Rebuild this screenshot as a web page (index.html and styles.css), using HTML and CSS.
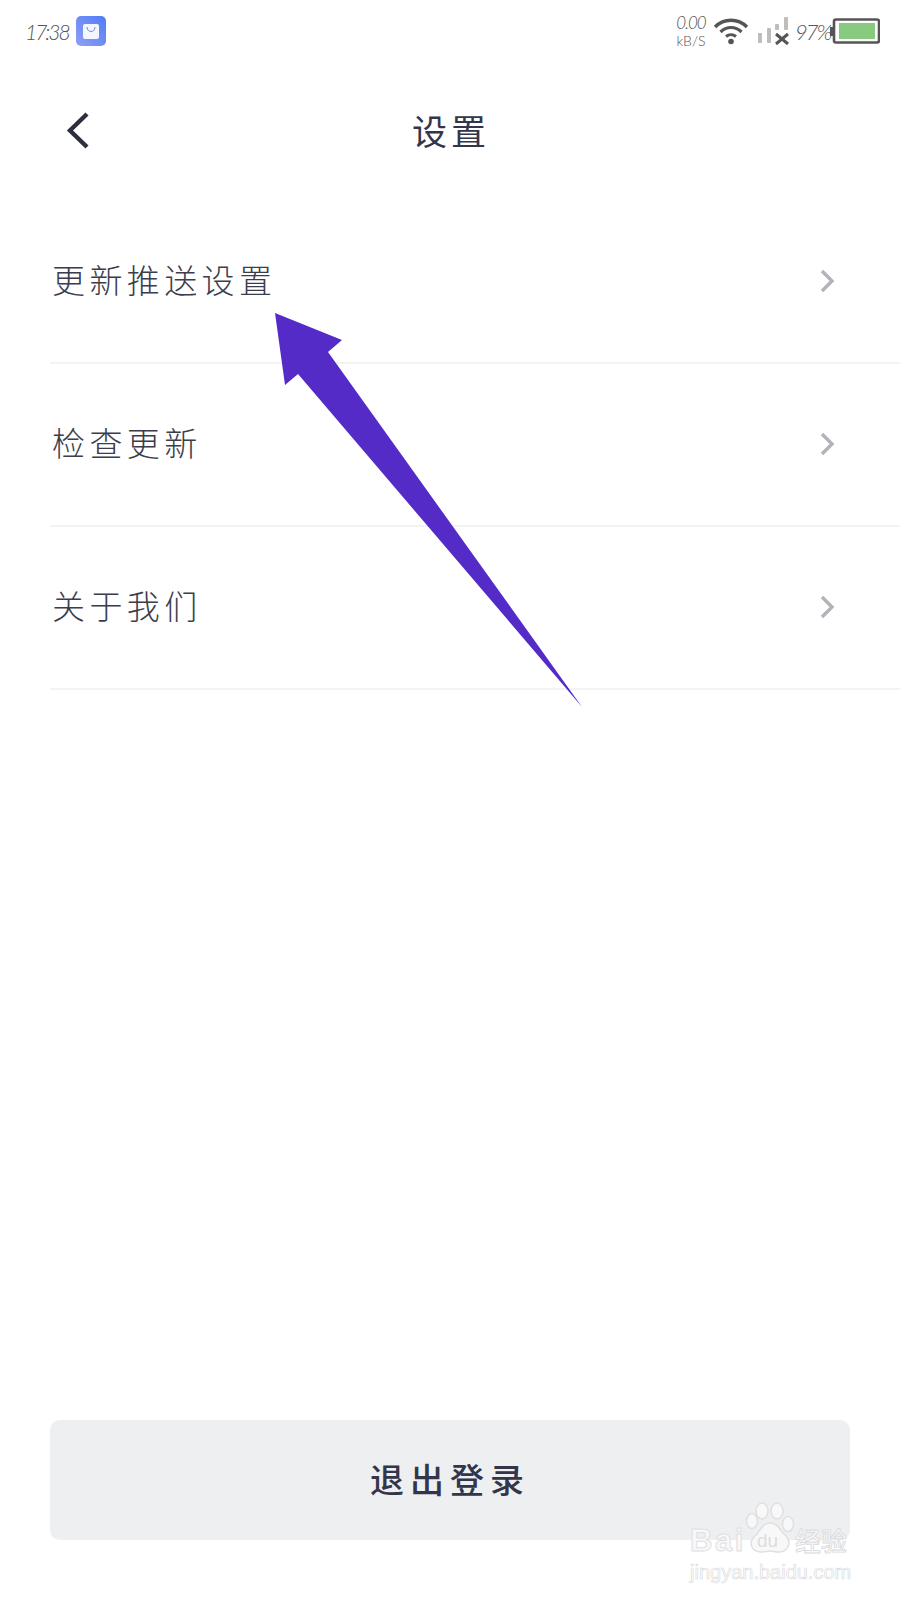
FILE: index.html
```html
<!DOCTYPE html>
<html lang="zh-CN">
<head>
  <meta charset="UTF-8">
  <title>设置</title>
  <link rel="stylesheet" href="styles.css">
</head>
<body>
<div class="status">
  <span class="time">17:38</span>
  <svg class="appicon" width="30" height="30" viewBox="0 0 30 30">
    <defs>
      <linearGradient id="appg" x1="1" y1="0" x2="0" y2="1">
        <stop offset="0" stop-color="#4f7df5"/>
        <stop offset="1" stop-color="#8f9ff5"/>
      </linearGradient>
    </defs>
    <rect width="30" height="30" rx="5" fill="url(#appg)"/>
    <rect x="7" y="8" width="16" height="15" rx="2" fill="#f4f6fe"/>
    <path d="M11 11c0 6 8 6 8 0" fill="none" stroke="#6f8ae8" stroke-width="1"/>
  </svg>
  <span class="spacer"></span>
  <span class="speed"><span>0.00</span><small>kB/S</small></span>
  <svg class="wifi" width="36" height="28" viewBox="0 0 36 28">
    <path d="M2 10C11 1 25 1 34 10" fill="none" stroke="#555" stroke-width="3.400"/>
    <path d="M7.500 15C13.500 9 22.500 9 28.500 15" fill="none" stroke="#555" stroke-width="3.200"/>
    <path d="M13 19.500C16 17 20 17 23 19.500" fill="none" stroke="#555" stroke-width="3"/>
    <circle cx="18" cy="24.500" r="2.800" fill="#555"/>
  </svg>
  <svg class="signal" width="34" height="28" viewBox="0 0 34 28">
    <rect x="1" y="16" width="4" height="10" rx="1" fill="#bdbdbd"/>
    <rect x="10" y="11" width="4" height="15" rx="1" fill="#bdbdbd"/>
    <rect x="18" y="7" width="4" height="6" rx="1" fill="#bdbdbd"/>
    <rect x="27" y="0" width="4" height="13" rx="1" fill="#bdbdbd"/>
    <path d="M19 17L31 27M31 17L19 27" stroke="#555" stroke-width="3"/>
  </svg>
  <span class="pct">97%</span>
  <svg class="battery" width="50" height="26" viewBox="0 0 50 26">
    <rect x="0" y="9" width="4" height="9" fill="#555"/>
    <rect x="4" y="1.500" width="45" height="23" rx="2" fill="#fff" stroke="#555" stroke-width="2.600"/>
    <rect x="9" y="5" width="36" height="16" fill="#86cb7f"/>
  </svg>
</div>

<div class="topbar">
  <svg class="back" width="26" height="40" viewBox="0 0 26 40">
    <path d="M21 4L4 20.500L21 37" fill="none" stroke="#2c2f3f" stroke-width="4.400"/>
  </svg>
  <h1 class="title">设置</h1>
</div>

<ul class="list">
  <li class="row"><span class="label">更新推送设置</span>
    <svg class="chev" width="16" height="26" viewBox="0 0 16 26"><path d="M3 3L13 13L3 23" fill="none" stroke="#b1b3b9" stroke-width="3.400"/></svg>
  </li>
  <li class="row"><span class="label">检查更新</span>
    <svg class="chev" width="16" height="26" viewBox="0 0 16 26"><path d="M3 3L13 13L3 23" fill="none" stroke="#b1b3b9" stroke-width="3.400"/></svg>
  </li>
  <li class="row"><span class="label">关于我们</span>
    <svg class="chev" width="16" height="26" viewBox="0 0 16 26"><path d="M3 3L13 13L3 23" fill="none" stroke="#b1b3b9" stroke-width="3.400"/></svg>
  </li>
</ul>

<button class="logout">退出登录</button>

<!-- annotation on top of the screenshot -->
<svg class="arrow" width="320" height="400" viewBox="0 0 320 400">
  <polygon points="5,3 72,30 58,42 312,397 28,64 15,75" fill="#552bc8"/>
</svg>

<div class="mark">
  <div class="mark-top">
    <span class="mark-en">Bai</span>
    <span class="mark-paw">
      <svg width="50" height="52" viewBox="0 0 50 52">
        <g fill="#f8f8f9" stroke="#dfe0e2" stroke-width="1.500">
          <ellipse cx="7" cy="19" rx="5.500" ry="7.500"/>
          <ellipse cx="17" cy="9" rx="6" ry="8"/>
          <ellipse cx="32" cy="9" rx="6" ry="8"/>
          <ellipse cx="43" cy="22" rx="5.500" ry="7.500"/>
          <path d="M25 21c8 0 10 8 16 13 6 6 2 16-7 16-4 0-6-1-9-1s-5 1-9 1c-9 0-13-9-7-15 6-5 8-14 16-14z"/>
        </g>
      </svg>
      <span class="mark-du">du</span>
    </span>
    <span class="mark-cn">经验</span>
  </div>
  <div class="mark-url">jingyan.baidu.com</div>
</div>
</body>
</html>
```

FILE: styles.css
```css
* {
  box-sizing: border-box;
}
html, body {
  margin: 0;
  padding: 0;
}
body {
  position: relative;
  width: 900px;
  height: 1600px;
  background: #fff;
  display: flex;
  flex-direction: column;
  font-family: "Noto Sans CJK SC", "Noto Sans", sans-serif;
  color: #33364a;
  overflow: hidden;
}

/* status bar */
.status {
  height: 62px;
  display: flex;
  align-items: center;
  padding: 0 20px 0 25px;
  color: #555;
  font-family: Lato, "Open Sans", sans-serif;
  font-weight: 300;
  font-style: italic;
}
.time {
  font-size: 21px;
  width: 51px;
  letter-spacing: -2px;
}
.spacer {
  flex: 1;
}
.speed {
  display: flex;
  flex-direction: column;
  align-items: center;
  width: 30px;
  line-height: 1;
  font-size: 17px;
  letter-spacing: -1px;
}
.speed small {
  font-size: 14px;
  font-style: normal;
  font-weight: 300;
  margin-top: 3px;
  letter-spacing: 0;
}
.wifi {
  margin: 0 8px 0 7px;
}
.signal {
  margin-right: 4px;
}
.pct {
  font-size: 22px;
  width: 35px;
  letter-spacing: -2px;
}

/* header */
.topbar {
  height: 139px;
  padding-bottom: 4px;
  display: flex;
  align-items: center;
  justify-content: center;
  position: relative;
}
.back {
  position: absolute;
  left: 66px;
  top: 48px;
}
.title {
  margin: 0 0 0 2px;
  font-size: 35px;
  font-weight: 400;
  letter-spacing: 4px;
  line-height: 1;
}

/* rows */
.list {
  list-style: none;
  margin: 0 0 0 50px;
  padding: 0;
}
.row {
  height: 163px;
  border-bottom: 2px solid #f3f3f4;
  display: flex;
  align-items: center;
  justify-content: space-between;
  padding: 0 65px 2px 2px;
  font-size: 33px;
  font-weight: 300;
  letter-spacing: 4.400px;
  color: #3b3d4c;
}
.label {
  padding-bottom: 4px;
}

.logout {
  display: block;
  margin: auto 0 60px 50px;
  width: 800px;
  height: 120px;
  padding: 0 0 4px;
  border: 0;
  border-radius: 10px;
  background: #eeeff1;
  color: #33364a;
  font-family: inherit;
  font-size: 34px;
  font-weight: 500;
  letter-spacing: 6px;
}

/* overlays */
.arrow {
  position: absolute;
  left: 270px;
  top: 310px;
}
.mark {
  position: absolute;
  left: 690px;
  top: 1502px;
  width: 164px;
}
.mark-top {
  display: flex;
  align-items: flex-end;
  height: 52px;
}
.mark-en {
  font: 700 31px/26px "Liberation Sans", sans-serif;
  letter-spacing: 2.500px;
  width: 55px;
  color: #f8f8f9;
  -webkit-text-stroke: 1px #dfe0e2;
}
.mark-paw {
  position: relative;
  display: flex;
  width: 50px;
  height: 52px;
}
.mark-du {
  position: absolute;
  left: 12px;
  top: 29px;
  font: 400 19px/20px "Liberation Sans", sans-serif;
  color: #dcdde0;
}
.mark-cn {
  font: 500 26px/28px "Noto Sans CJK SC", sans-serif;
  color: #f8f8f9;
  -webkit-text-stroke: .8px #d9dadd;
  white-space: nowrap;
}
.mark-url {
  margin-top: 7px;
  font: 400 20px/22px "Liberation Sans", sans-serif;
  color: #fff;
  -webkit-text-stroke: .7px #dcdde0;
  white-space: nowrap;
}
```
